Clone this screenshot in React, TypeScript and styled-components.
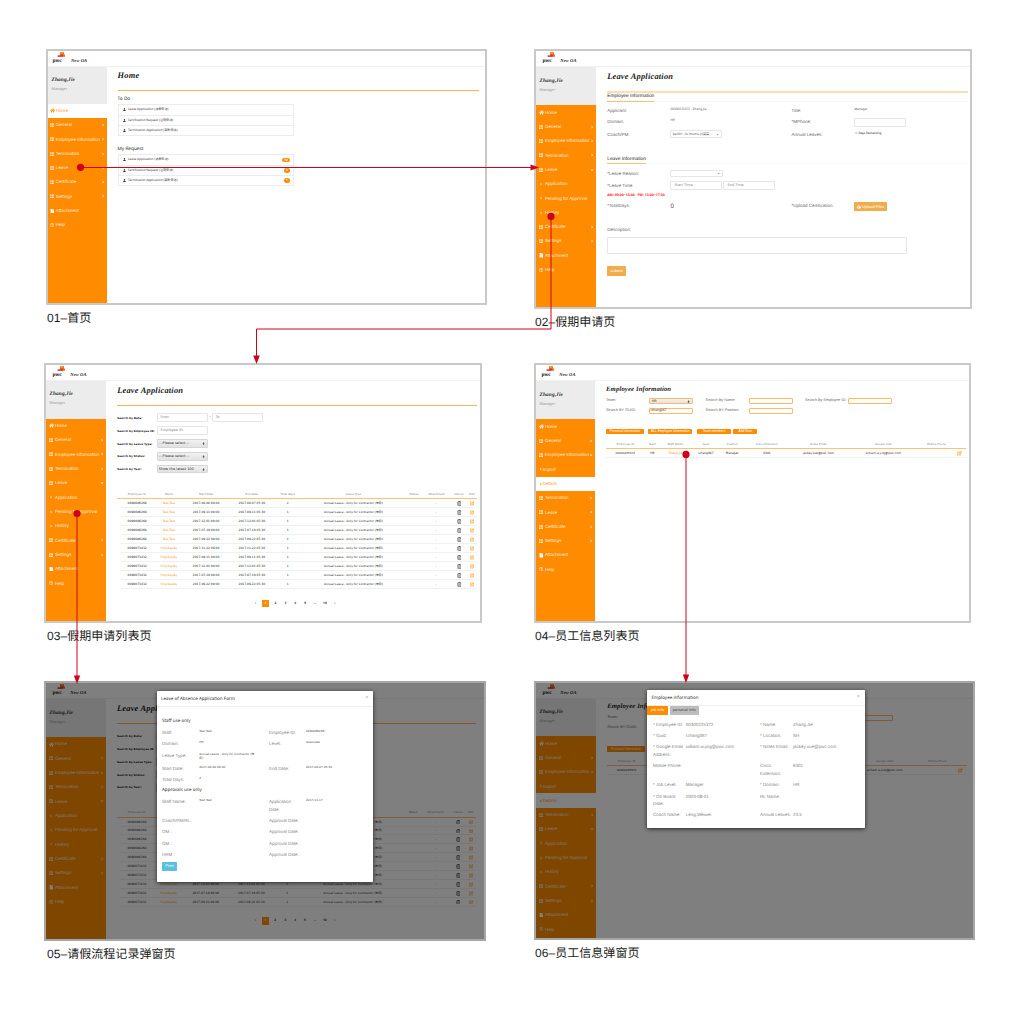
import React from "react";
import styled, { createGlobalStyle, css } from "styled-components";
import {
  FaHome,
  FaThList,
  FaFile,
  FaRegQuestionCircle,
  FaAngleRight,
  FaAngleDown,
  FaUser,
  FaRegTrashAlt,
  FaRegEdit,
  FaCloudUploadAlt,
  FaSort,
  FaCaretDown,
} from "react-icons/fa";

const sans = `"Liberation Sans", "Noto Sans CJK SC", sans-serif`;
const humanist = `"Noto Sans", "Noto Sans CJK SC", sans-serif`;
const wide = `"DejaVu Sans", "Noto Sans CJK SC", sans-serif`;
const serif = `"Liberation Serif", "DejaVu Serif", serif`;
const orange = "#ff8c00";
const red = "#d0021b";

const Global = createGlobalStyle`
  * { box-sizing: border-box; }
  body {
    margin: 0;
    background: #fff;
    font-family: ${sans};
    text-rendering: geometricPrecision;
    -webkit-font-smoothing: antialiased;
  }
`;

const Canvas = styled.main`
  position: relative;
  width: 1020px;
  height: 1009px;
  overflow: hidden;
  background: #fff;
  line-height: 1;
  white-space: nowrap;
`;

/* ---------- artboards ---------- */

const Board = styled.section<{ $x: number; $y: number; $w: number; $h: number; $dim?: boolean }>`
  position: absolute;
  left: ${(p) => p.$x}px;
  top: ${(p) => p.$y}px;
  width: ${(p) => p.$w}px;
  height: ${(p) => p.$h}px;
  border: 2px solid ${(p) => (p.$dim ? "#a6a6a6" : "#c9c9c9")};
  background: #fff;
  display: flex;
  flex-direction: column;
  overflow: hidden;
`;

const Caption = styled.h2<{ $x: number; $y: number }>`
  position: absolute;
  left: ${(p) => p.$x}px;
  top: ${(p) => p.$y}px;
  margin: 0;
  font: 400 12px/14px ${sans};
  letter-spacing: 0.05px;
  color: #1c1c1c;
`;

const Flow = styled.svg`
  position: absolute;
  inset: 0;
  pointer-events: none;
`;

const TopBar = styled.header<{ $h: number; $inset: number }>`
  flex: none;
  height: ${(p) => p.$h}px;
  display: flex;
  align-items: flex-start;
  padding: 1px 0 0 ${(p) => p.$inset}px;
  gap: 3.7px;
  border-bottom: 1px solid #f0f0f0;
`;

const Brand = styled.span`
  font: italic 700 4.5px/1 ${serif};
  letter-spacing: 0.1px;
  color: #222;
  margin-top: 6.9px;
`;

const Body = styled.div`
  flex: 1;
  display: flex;
  min-height: 0;
`;

const Side = styled.aside<{ $w: number }>`
  flex: none;
  width: ${(p) => p.$w}px;
  background: ${orange};
`;

const Profile = styled.div<{ $h: number }>`
  height: ${(p) => p.$h}px;
  background: #ececec;
  padding: 11.8px 0 0 3.6px;
  display: flex;
  flex-direction: column;
  gap: 3.6px;
`;

const UserName = styled.strong`
  font: italic 700 5.3px/1 ${serif};
  letter-spacing: 0.13px;
  color: #333;
`;

const Role = styled.span`
  font-size: 3.9px;
  color: #999;
`;

const MenuItem = styled.div<{ $active?: boolean; $inset: number }>`
  height: 14.32px;
  display: flex;
  align-items: center;
  padding: 0 1.9px 0 ${(p) => p.$inset}px;
  font-size: 4.55px;
  color: ${(p) => (p.$active ? "#ff9a22" : "rgba(255,255,255,.86)")};
  background: ${(p) => (p.$active ? "#fff" : "transparent")};
`;

const MenuIcon = styled.span<{ $size: number; $w: number; $faint?: boolean }>`
  width: ${(p) => p.$w}px;
  display: flex;
  align-items: center;
  font-size: ${(p) => p.$size}px;
  opacity: ${(p) => (p.$faint ? 0.85 : 1)};
`;

const MenuText = styled.span`
  flex: 1;
  padding-top: 1px;
`;

const Main = styled.div<{ $l: number; $r: number }>`
  flex: 1;
  min-width: 0;
  padding: 0 ${(p) => p.$r}px 0 ${(p) => p.$l}px;
`;

/* ---------- page content ---------- */

const TitleBar = styled.div<{ $h: number; $top: number; $size?: number; $line?: string }>`
  height: ${(p) => p.$h}px;
  padding-top: ${(p) => p.$top}px;
  font: italic 700 ${(p) => p.$size ?? 8.4}px/1 ${serif};
  letter-spacing: ${(p) => (p.$size ? 0.13 : 0.22)}px;
  color: #222;
  ${(p) => p.$line && css`border-bottom: ${p.$line};`}
`;

const ListHead = styled.h3<{ $h: number }>`
  margin: 0;
  height: ${(p) => p.$h}px;
  display: flex;
  align-items: flex-end;
  padding-bottom: 1.7px;
  font: 400 4.7px/1 ${humanist};
  color: #222;
`;

const ListBox = styled.div`
  width: 176.6px;
  border: 1px solid #ececec;
`;

const ListRow = styled.div`
  height: 10.1px;
  display: flex;
  align-items: center;
  gap: 1.8px;
  padding: 0 3.4px 0 4.6px;
  font: 400 3.1px/1 ${humanist};
  color: #333;
  & + & {
    border-top: 1px solid #ececec;
  }
  svg {
    font-size: 2.9px;
  }
`;

const Badge = styled.span`
  margin-left: auto;
  min-width: 5.4px;
  height: 4.8px;
  padding: 0 2px;
  border-radius: 3px;
  background: ${orange};
  color: #fff;
  font: 700 3.1px/4.8px ${humanist};
  text-align: center;
`;

const SubHead = styled.div<{ $mt?: number }>`
  margin-top: ${(p) => p.$mt ?? 0}px;
  height: 8.5px;
  display: flex;
  border-bottom: 1px solid #f6f6f6;
  font-size: 4.85px;
  color: #222;
  span {
    height: 8.5px;
    padding-top: 2.3px;
    border-bottom: 1px solid #ffbf70;
  }
`;

const Form = styled.div<{ $cols: string; $rows: string; $mt?: number; $size?: number; $l?: number }>`
  display: grid;
  grid-template-columns: ${(p) => p.$cols};
  grid-template-rows: ${(p) => p.$rows};
  margin: ${(p) => p.$mt ?? 0}px 0 0 ${(p) => p.$l ?? 0}px;
  font-size: ${(p) => p.$size ?? 4.5}px;
  color: #666;
`;

const Cell = styled.div<{ $up?: number; $span?: number; $label?: boolean }>`
  display: flex;
  align-items: center;
  gap: 1px;
  min-width: 0;
  padding-top: ${(p) => (p.$label ? 1.2 : 0)}px;
  padding-bottom: ${(p) => (p.$up ?? 0) * 2}px;
  ${(p) => p.$span && css`grid-column: span ${p.$span};`}
`;

const Tiny = styled.span<{ $size?: number; $color?: string }>`
  font: 400 ${(p) => p.$size ?? 3.15}px/1 ${humanist};
  color: ${(p) => p.$color ?? "#555"};
`;

const Shift = styled.span`
  font: 700 3.5px/1 ${humanist};
  color: #f22;
  margin-right: 1.6px;
`;

const Field = styled.div<{ $w: number; $h?: number; $kind?: "plain" | "grey" | "orange" | "orangeGrey"; $pad?: number }>`
  width: ${(p) => p.$w}px;
  height: ${(p) => p.$h ?? 9}px;
  flex: none;
  display: flex;
  align-items: center;
  justify-content: space-between;
  padding: 0.8px 1.6px 0 ${(p) => p.$pad ?? 3}px;
  border: 1px solid ${(p) => (p.$kind?.startsWith("orange") ? "#ffb964" : p.$kind === "grey" ? "#d6d6d6" : "#e6e6e6")};
  border-radius: 1px;
  background: ${(p) => (p.$kind === "grey" || p.$kind === "orangeGrey" ? "linear-gradient(#f1f1f1, #e2e2e2)" : "#fff")};
  font: 400 3.5px/1 ${wide};
  color: ${(p) => (p.$kind && p.$kind !== "plain" ? "#333" : "#888")};
  svg {
    font-size: 3.2px;
  }
`;

const Button = styled.button<{ $w: number; $h: number; $bg: string; $mt?: number; $ml?: number; $size?: number }>`
  display: flex;
  align-items: center;
  justify-content: center;
  gap: 1px;
  flex: none;
  width: ${(p) => p.$w}px;
  height: ${(p) => p.$h}px;
  margin: ${(p) => p.$mt ?? 0}px 0 0 ${(p) => p.$ml ?? 0}px;
  padding: 0.8px 0 0;
  border: 0;
  border-radius: 0.8px;
  background: ${(p) => p.$bg};
  color: #fff;
  font: 400 ${(p) => p.$size ?? 4}px/1 ${sans};
  white-space: nowrap;
`;

const TextBox = styled.div`
  width: 300px;
  height: 16.6px;
  margin-top: 1.6px;
  border: 1px solid #e6e6e6;
  border-radius: 1px;
`;

const SearchLabel = styled.strong`
  font: 700 2.8px/1 ${wide};
  color: #222;
`;

const TableRow = styled.div<{ $cols: string; $h: number; $head?: boolean; $mt?: number; $indent?: number }>`
  display: grid;
  grid-template-columns: ${(p) => p.$cols};
  align-items: center;
  justify-items: center;
  height: ${(p) => p.$h}px;
  margin-top: ${(p) => p.$mt ?? 0}px;
  padding: 0.9px 0 0 ${(p) => (p.$head ? p.$indent ?? 0 : 0)}px;
  margin-left: ${(p) => (p.$head ? 0 : p.$indent ?? 0)}px;
  border-bottom: 1px solid ${(p) => (p.$head ? "#ffc078" : "#f0f0f0")};
  font: 400 2.85px/1 ${wide};
  color: ${(p) => (p.$head ? "#888" : "#222")};
  svg {
    font-size: 4.8px;
  }
  > * {
    margin: 0 -10px;
  }
`;

const Data = styled.span<{ $link?: boolean; $size?: number }>`
  color: ${(p) => (p.$link ? orange : "inherit")};
  font-size: ${(p) => p.$size ?? 2.95}px;
`;

const IconData = styled.span<{ $color: string }>`
  display: flex;
  color: ${(p) => p.$color};
`;

const Pager = styled.div`
  display: flex;
  align-items: center;
  height: 7.4px;
  margin: 10.6px 0 0 134.8px;
  font: 700 3.2px/1 ${humanist};
  color: #333;
`;

const PageNo = styled.span<{ $on?: boolean }>`
  width: 7.4px;
  height: 7.4px;
  line-height: 7.8px;
  margin-right: 2.5px;
  text-align: center;
  background: ${(p) => (p.$on ? orange : "transparent")};
  color: ${(p) => (p.$on ? "#fff" : "inherit")};
`;

const ButtonRow = styled.div`
  display: flex;
  gap: 4.5px;
  height: 5.4px;
  margin-top: 14.4px;
`;

/* ---------- dialogs ---------- */

const Shade = styled.div`
  position: absolute;
  inset: 0;
  background: rgba(0, 0, 0, 0.5);
`;

const Dialog = styled.div<{ $x: number; $y: number; $w: number; $h: number }>`
  position: absolute;
  left: ${(p) => p.$x}px;
  top: ${(p) => p.$y}px;
  width: ${(p) => p.$w}px;
  height: ${(p) => p.$h}px;
  background: #fff;
  border-radius: 0.8px;
  box-shadow: 0 1px 4px rgba(0, 0, 0, 0.7);
`;

const DialogHead = styled.div`
  height: 16.6px;
  display: flex;
  align-items: center;
  justify-content: space-between;
  padding: 0.8px 4.6px 0 4.4px;
  border-bottom: 1.6px solid #efefef;
  font: 400 4.5px/1 ${humanist};
  color: #333;
`;

const Close = styled.span`
  font: 400 5.6px/1 ${humanist};
  color: #aaa;
  margin-top: -2px;
`;

const DialogGrid = styled.div<{ $cols: string; $rows: string; $mt: number; $l: number }>`
  display: grid;
  grid-template-columns: ${(p) => p.$cols};
  grid-template-rows: ${(p) => p.$rows};
  margin: ${(p) => p.$mt}px 0 0 ${(p) => p.$l}px;
  font-size: 4.5px;
  line-height: 7.4px;
  color: #858585;
  white-space: pre;
`;

const Fine = styled.span`
  font: 400 2.9px/4.4px ${wide};
  color: #444;
`;

const GroupTitle = styled.span`
  grid-column: 1 / -1;
  font: 400 4.5px/7.4px ${humanist};
  color: #333;
`;

const Tabs = styled.div`
  display: flex;
  gap: 1.6px;
`;

const Tab = styled.span<{ $on?: boolean; $w: number }>`
  width: ${(p) => p.$w}px;
  height: 9px;
  text-align: center;
  border-radius: 0.8px;
  background: ${(p) => (p.$on ? orange : "#bcbcbc")};
  color: ${(p) => (p.$on ? "#fff" : "#444")};
  font: 400 3.5px/9.6px ${wide};
`;

/* ---------- shared pieces ---------- */

const Logo = () => (
  <svg width="15" height="13" viewBox="0 0 15 13">
    <path d="M8 0.2h4v2.4h1v2.2H8z" fill="#ee6a22" />
    <path d="M8.4 0.2h2.6v1.8H8.4z" fill="#f4942e" />
    <path d="M5.6 3.4h3v1.4h-3z" fill="#c8202c" />
    <path d="M8.6 2.6h2.2v2.2H8.6z" fill="#dc3a28" />
    <text x="0.4" y="9.5" fontFamily="DejaVu Serif, serif" fontWeight="700" fontSize="4.9" textLength="9.4" lengthAdjust="spacingAndGlyphs" fill="#222">
      pwc
    </text>
  </svg>
);

type Entry = { text: string; kind: "home" | "list" | "open" | "sub" | "subLeft" | "file" | "help"; active?: boolean };

const list = (text: string): Entry => ({ text, kind: "list" });
const leaveSubs: Entry[] = ["Application", "Pending for Approval", "History"].map((text) => ({ text, kind: "sub" as const }));
const employeeSubs: Entry[] = [
  { text: "Import", kind: "subLeft" },
  { text: "Details", kind: "subLeft", active: true },
];

const buildMenu = (o: { home?: boolean; employee?: boolean; leave?: boolean }): Entry[] => [
  { text: "Home", kind: "home", active: o.home },
  list("General"),
  { text: "Employee Information", kind: o.employee ? "open" : "list" },
  ...(o.employee ? employeeSubs : []),
  list("Termination"),
  { text: "Leave", kind: o.leave ? "open" : "list" },
  ...(o.leave ? leaveSubs : []),
  list("Certificate"),
  list("Settings"),
  { text: "Attachment", kind: "file" },
  { text: "Help", kind: "help" },
];

const Item = ({ text, kind, active, inset }: Entry & { inset: number }) => (
  <MenuItem $active={active} $inset={inset}>
    {kind === "home" && <MenuIcon $size={5} $w={5.8}><FaHome /></MenuIcon>}
    {(kind === "list" || kind === "open") && <MenuIcon $size={4.2} $w={5.8} $faint><FaThList /></MenuIcon>}
    {kind === "file" && <MenuIcon $size={4.6} $w={5.8}><FaFile color="#fff" /></MenuIcon>}
    {kind === "help" && <MenuIcon $size={4.2} $w={5.8}><FaRegQuestionCircle /></MenuIcon>}
    {kind === "sub" && <MenuIcon $size={4.2} $w={5.8}><FaAngleRight /></MenuIcon>}
    {kind === "subLeft" && <MenuIcon $size={4.2} $w={3.6}><FaAngleRight /></MenuIcon>}
    <MenuText>{text}</MenuText>
    {kind === "list" && <FaAngleRight size={4.2} />}
    {kind === "open" && <FaAngleDown size={4.2} />}
  </MenuItem>
);

type ShellProps = {
  top: number;
  side: number;
  profile: number;
  left: number;
  right: number;
  brandInset?: number;
  menuInset?: number;
  menu: Entry[];
  children: React.ReactNode;
};

const Shell = ({ top, side, profile, left, right, brandInset = 5.6, menuInset = 3.2, menu, children }: ShellProps) => (
  <>
    <TopBar $h={top} $inset={brandInset}>
      <Logo />
      <Brand>New OA</Brand>
    </TopBar>
    <Body>
      <Side $w={side}>
        <Profile $h={profile}>
          <UserName>Zhang,Jie</UserName>
          <Role>Manager</Role>
        </Profile>
        {menu.map((m) => (
          <Item key={m.text} {...m} inset={menuInset} />
        ))}
      </Side>
      <Main $l={left} $r={right}>{children}</Main>
    </Body>
  </>
);

const requests = ["Leave Application (请假申请)", "Certification Request (证明申请)", "Termination Application (离职申请)"];

const RequestList = ({ counts }: { counts?: number[] }) => (
  <ListBox>
    {requests.map((r, i) => (
      <ListRow key={r}>
        <FaUser />
        {r}
        {counts && <Badge>{counts[i]}</Badge>}
      </ListRow>
    ))}
  </ListBox>
);

const HomePage = () => (
  <>
    <TitleBar $h={24.5} $top={5.3} $line="1px solid #ffb14f">Home</TitleBar>
    <ListHead $h={12.8}>To Do</ListHead>
    <RequestList />
    <ListHead $h={17.8}>My Request</ListHead>
    <RequestList counts={[12, 3, 1]} />
  </>
);

const applicationCols = "63.2px 121.2px 62.6px 1fr";

const ApplyPage = () => (
  <>
    <TitleBar $h={25.8} $top={6.1} $line="2px solid #ffdfb2">Leave Application</TitleBar>
    <SubHead><span>Employee Information</span></SubHead>
    <Form $cols={applicationCols} $rows="11.5px 12px 12.5px" $mt={3}>
      <Cell $label>Applicant:</Cell>
      <Cell $up={1}><Tiny>00300225372 - Zhang,Jie</Tiny></Cell>
      <Cell $label>Title:</Cell>
      <Cell $up={1}><Tiny>Manager</Tiny></Cell>
      <Cell $label>Domain:</Cell>
      <Cell $up={1.4}><Tiny>HR</Tiny></Cell>
      <Cell $label>*MPhone:</Cell>
      <Cell><Field $w={51.4} /></Cell>
      <Cell $label>Coach/PM:</Cell>
      <Cell>
        <Field $w={51.4} $h={7.8} $pad={1.4}>
          <Tiny>bei001--liu mumu-刘某某-...</Tiny>
          <FaCaretDown />
        </Field>
      </Cell>
      <Cell $label>Annual Leaves:</Cell>
      <Cell $up={1}>
        <Tiny $size={2.9} $color="#999">15</Tiny>
        <Tiny $size={3} $color="#111">Days Remaining</Tiny>
      </Cell>
    </Form>
    <SubHead $mt={15.2}><span>Leave Information</span></SubHead>
    <Form $cols={applicationCols} $rows="12px 11.6px 8px 12.8px" $mt={3.3}>
      <Cell $label>*Leave Reason:</Cell>
      <Cell $span={3}><Field $w={52.4} $h={7.6}><span /><FaCaretDown /></Field></Cell>
      <Cell $label>*Leave Time:</Cell>
      <Cell $span={3}>
        <Field $w={52}>Start Time</Field>
        <Field $w={52}>End Time</Field>
      </Cell>
      <Cell $span={4} $label>
        <Shift>AM: 09:00~13:00</Shift>
        <Shift>PM: 13:00~17:30</Shift>
      </Cell>
      <Cell $label>*TotalDays:</Cell>
      <Cell $label><Tiny $size={6.2}>0</Tiny></Cell>
      <Cell $label>*Upload Certification:</Cell>
      <Cell $label>
        <Button $w={33} $h={9.2} $bg="#f0ad4e"><FaCloudUploadAlt />Upload Files</Button>
      </Cell>
    </Form>
    <Form $cols="1fr" $rows="10.6px" $mt={12.8}>
      <Cell $label>Description:</Cell>
    </Form>
    <TextBox />
    <Button $w={18.6} $h={9.2} $bg="#f0ad4e" $mt={12.8} $size={4.3}>submit</Button>
  </>
);

const leaveCols = "33.2fr 30.2fr 44.4fr 47fr 25fr 106.4fr 14.8fr 30fr 15.2fr 10.8fr";
const leaveHeads = ["Employee ID.", "Name", "Start Date", "End Date", "Total Days", "Leave Type", "Status", "Attachment", "Cancel", "Edit"];
const periods = [
  ["2017-06-06 09:00", "2017-06-07 05:30"],
  ["2017-09-11 09:00", "2017-09-11 05:30"],
  ["2017-12-01 09:00", "2017-12-01 05:30"],
  ["2017-07-19 09:00", "2017-07-19 05:30"],
  ["2017-09-22 09:00", "2017-09-22 05:30"],
  ["2017-11-22 09:00", "2017-11-22 05:30"],
  ["2017-09-11 09:00", "2017-09-11 05:30"],
  ["2017-12-01 09:00", "2017-12-01 05:30"],
  ["2017-07-19 09:00", "2017-07-19 05:30"],
  ["2017-09-22 09:00", "2017-09-22 05:30"],
];

const LeaveListPage = ({ rowHeight }: { rowHeight: number }) => (
  <>
    <TitleBar $h={25} $top={6} $line="1px solid #ffb14f">Leave Application</TitleBar>
    <Form $cols="39.4px 1fr" $rows="repeat(5, 12.82px)" $mt={5.6}>
      <Cell $label><SearchLabel>Search by Date:</SearchLabel></Cell>
      <Cell>
        <Field $w={51.6}>From</Field>-<Field $w={51.4}>To</Field>
      </Cell>
      <Cell $label><SearchLabel>Search by Employee ID:</SearchLabel></Cell>
      <Cell><Field $w={51.6}>Employee ID.</Field></Cell>
      <Cell $label><SearchLabel>Search by Leave Type:</SearchLabel></Cell>
      <Cell><Field $w={51.4} $kind="grey" $h={8.8} $pad={1.2}>---Please select---<FaSort /></Field></Cell>
      <Cell $label><SearchLabel>Search by Status:</SearchLabel></Cell>
      <Cell><Field $w={51.4} $kind="grey" $h={8.8} $pad={1.2}>---Please select---<FaSort /></Field></Cell>
      <Cell $label><SearchLabel>Search by Year:</SearchLabel></Cell>
      <Cell><Field $w={51.4} $kind="grey" $h={8.8} $pad={1.2}>Show the latest 100<FaSort /></Field></Cell>
    </Form>
    <TableRow $cols={leaveCols} $h={9.4} $mt={14.6} $head $indent={3.4}>
      {leaveHeads.map((h) => <Data key={h} $size={2.8}>{h}</Data>)}
    </TableRow>
    {periods.map(([start, end], i) => (
      <TableRow key={i} $cols={leaveCols} $h={rowHeight} $indent={3.4}>
        <Data $size={3}>{i < 5 ? "0090086268" : "0090073432"}</Data>
        <Data $link>{i < 5 ? "Test,Test" : "Ying,Kayley"}</Data>
        <Data>{start}</Data>
        <Data>{end}</Data>
        <Data>{i === 0 ? 2 : 1}</Data>
        <Data $size={2.88}>Annual Leave - Only for Contractor (年假)</Data>
        <span />
        <Data>-</Data>
        <IconData $color="#333"><FaRegTrashAlt /></IconData>
        <IconData $color={orange}><FaRegEdit /></IconData>
      </TableRow>
    ))}
    <Pager>
      {["‹", "1", "2", "3", "4", "5", "...", "10", "›"].map((p) => (
        <PageNo key={p} $on={p === "1"}>{p}</PageNo>
      ))}
    </Pager>
  </>
);

const employeeCols = "38.7fr 15.3fr 30.6fr 30.2fr 23fr 46.4fr 56.2fr 73.8fr 32.2fr 13.6fr";

const EmployeePage = () => (
  <>
    <TitleBar $h={14.2} $top={5.5} $size={6.7}>Employee Information</TitleBar>
    <Form $cols="43.3px 56.3px 43.4px 56px 43.3px 1fr" $rows="10px 9px" $size={3.8}>
      <Cell $label>Team:</Cell>
      <Cell $label><Field $w={43.4} $h={6} $kind="orangeGrey" $pad={1.4}>HR<FaSort /></Field></Cell>
      <Cell $label>Search By Name:</Cell>
      <Cell $label><Field $w={43.6} $h={6} $kind="orange" /></Cell>
      <Cell $label>Search By Employee ID:</Cell>
      <Cell $label><Field $w={43.6} $h={6} $kind="orange" /></Cell>
      <Cell $label>Search BY GUID:</Cell>
      <Cell $label><Field $w={43.4} $h={6} $kind="orange" $pad={0.2}><Tiny $color="#222">rzhang067</Tiny></Field></Cell>
      <Cell $label>Search BY Position:</Cell>
      <Cell $label><Field $w={43.6} $h={6} $kind="orange" /></Cell>
    </Form>
    <ButtonRow>
      <Button $w={37.8} $h={5.6} $bg={orange} $size={3.3}>Personal Information</Button>
      <Button $w={44.2} $h={5.6} $bg={orange} $size={3.3}>ALL Employee Information</Button>
      <Button $w={34} $h={5.6} $bg={orange} $size={3.3}>Team members</Button>
      <Button $w={23.4} $h={5.6} $bg={orange} $size={3.3} $ml={-2}>Add New</Button>
    </ButtonRow>
    <TableRow $cols={employeeCols} $h={9} $mt={5.7} $head>
      {["Employee ID", "Team", "Staff Name", "Guid", "Position", "Cisco Extension", "Notes Email", "Google mail", "Mobile Phone", ""].map((h) => (
        <Data key={h} $size={2.8}>{h}</Data>
      ))}
    </TableRow>
    <TableRow $cols={employeeCols} $h={9}>
      <Data $size={2.8}>00300225372</Data>
      <Data>HR</Data>
      <Data $link>Zhang,Jie</Data>
      <Data>rzhang067</Data>
      <Data>Manager</Data>
      <Data>6301</Data>
      <Data>jackey.xue@pwc.com</Data>
      <Data>william.w.jing@pwc.com</Data>
      <span />
      <IconData $color={orange}><FaRegEdit /></IconData>
    </TableRow>
  </>
);

const LeaveDialog = () => (
  <Dialog $x={110.7} $y={7.7} $w={216.3} $h={191.2}>
    <DialogHead>Leave of Absence Application Form<Close>×</Close></DialogHead>
    <DialogGrid
      $cols="37.3px 69.7px 37px 1fr"
      $rows="10.7px 11.3px 11.4px 13px 11.3px 11.3px 11px 18.4px 11.6px 11.4px 11.3px 10.7px"
      $mt={10.9}
      $l={5.3}
    >
      <GroupTitle>Staff use only</GroupTitle>
      <span>Staff:</span><Fine>Test,Test</Fine><span>Employee ID:</span><Fine>0090086268</Fine>
      <span>Domain:</span><Fine>HR</Fine><span>Level:</span><Fine>Associate</Fine>
      <span>Leave Type:</span><Fine>{"Annual Leave - Only for Contractor (年\n假)"}</Fine><span /><span />
      <span>Start Date:</span><Fine>2017-06-06 09:00</Fine><span>End Date:</span><Fine>2017-06-07 05:30</Fine>
      <span>Total Days:</span><Fine>2</Fine><span /><span />
      <GroupTitle>Approvals use only</GroupTitle>
      <span>Staff Name:</span><Fine>Test,Test</Fine><span>{"Application\nDate:"}</span><Fine>2017-11-17</Fine>
      <span>Coach/PM/RL:</span><span /><span>Approval Date:</span><span />
      <span>OM :</span><span /><span>Approval Date:</span><span />
      <span>GM :</span><span /><span>Approval Date:</span><span />
      <span>HRM :</span><span /><span>Approval Date:</span><span />
      <Button $w={15} $h={9} $bg="#5bc0de">Print</Button>
    </DialogGrid>
  </Dialog>
);

const EmployeeDialog = () => (
  <Dialog $x={111.2} $y={6.7} $w={217.4} $h={138.3}>
    <DialogHead>Employee information<Close>×</Close></DialogHead>
    <Tabs>
      <Tab $w={20.8} $on>Job Info</Tab>
      <Tab $w={29.4}>personal Info</Tab>
    </Tabs>
    <DialogGrid $cols="32.7px 74.3px 33px 1fr" $rows="11.7px 11px 19px 18.7px 11.6px 18.7px 8px" $mt={5.5} $l={5.8}>
      <span>* Employee ID:</span><span>00300225372</span><span>* Name:</span><span>Zhang,Jie</span>
      <span>* Guid:</span><span>rzhang067</span><span>* Location:</span><span>SH</span>
      <span>{"* Google Email\nAddress:"}</span><span>william.w.jing@pwc.com</span><span>* Notes Email:</span><span>jackey.xue@pwc.com</span>
      <span>Mobile Phone:</span><span /><span>{"Cisco\nExtension:"}</span><span>6301</span>
      <span>* Job Level:</span><span>Manager</span><span>* Domain:</span><span>HR</span>
      <span>{"* On Board\nDate:"}</span><span>2003-08-01</span><span>RL Name:</span><span />
      <span>Coach Name:</span><span>Leng,Weiwei</span><span>Annual Leaves:</span><span>23.5</span>
    </DialogGrid>
  </Dialog>
);

const Connectors = () => (
  <Flow width="1020" height="1009" viewBox="0 0 1020 1009" fill={red}>
    <g fill="none" stroke={red} strokeWidth="1">
      <path d="M81 167.5H532" />
      <path d="M551 216.5V329H256.5V358" />
      <path d="M77 513.5V678" />
      <path d="M686 454.5V677" />
    </g>
    <circle cx="80.5" cy="167.3" r="3.6" />
    <circle cx="551" cy="216.4" r="3.6" />
    <circle cx="77" cy="513.5" r="3.6" />
    <circle cx="686" cy="454.4" r="3.6" />
    <path d="M530.5 164.4L539.2 167.5L530.5 170.6z" />
    <path d="M253.2 355.5L256.5 364L259.8 355.5z" />
    <path d="M73.8 675.5L77 684L80.2 675.5z" />
    <path d="M682.8 674.5L686 683L689.2 674.5z" />
  </Flow>
);

export default function App() {
  return (
    <>
      <Global />
      <Canvas>
        <Board $x={46} $y={49} $w={441} $h={256}>
          <Shell top={15.5} side={59} profile={37} left={10.6} right={6} brandInset={4.3} menuInset={2} menu={buildMenu({ home: true })}>
            <HomePage />
          </Shell>
        </Board>
        <Caption $x={47} $y={311}>01–首页</Caption>

        <Board $x={534} $y={49} $w={438} $h={260}>
          <Shell top={16.3} side={60} profile={38} left={11.2} right={2.3} menu={buildMenu({ leave: true })}>
            <ApplyPage />
          </Shell>
        </Board>
        <Caption $x={535} $y={315}>02–假期申请页</Caption>

        <Board $x={44} $y={363} $w={438} $h={260}>
          <Shell top={15.7} side={60} profile={38} left={11.2} right={2.7} menu={buildMenu({ leave: true })}>
            <LeaveListPage rowHeight={8.97} />
          </Shell>
        </Board>
        <Caption $x={47} $y={629}>03–假期申请列表页</Caption>

        <Board $x={534} $y={363} $w={437} $h={260}>
          <Shell top={16.3} side={59} profile={38} left={11} right={3} brandInset={4.6} menu={buildMenu({ employee: true })}>
            <EmployeePage />
          </Shell>
        </Board>
        <Caption $x={535} $y={629}>04–员工信息列表页</Caption>

        <Board $x={44} $y={681} $w={442} $h={260} $dim>
          <Shell top={16} side={60} profile={38} left={11} right={7.7} menu={buildMenu({ leave: true })}>
            <LeaveListPage rowHeight={8.9} />
          </Shell>
          <Shade />
          <LeaveDialog />
        </Board>
        <Caption $x={47} $y={947}>05–请假流程记录弹窗页</Caption>

        <Board $x={534} $y={681} $w={441} $h={259} $dim>
          <Shell top={15.5} side={60} profile={37.7} left={11.2} right={5.7} menu={buildMenu({ employee: true, leave: true })}>
            <EmployeePage />
          </Shell>
          <Shade />
          <EmployeeDialog />
        </Board>
        <Caption $x={535} $y={946}>06–员工信息弹窗页</Caption>

        <Connectors />
      </Canvas>
    </>
  );
}
